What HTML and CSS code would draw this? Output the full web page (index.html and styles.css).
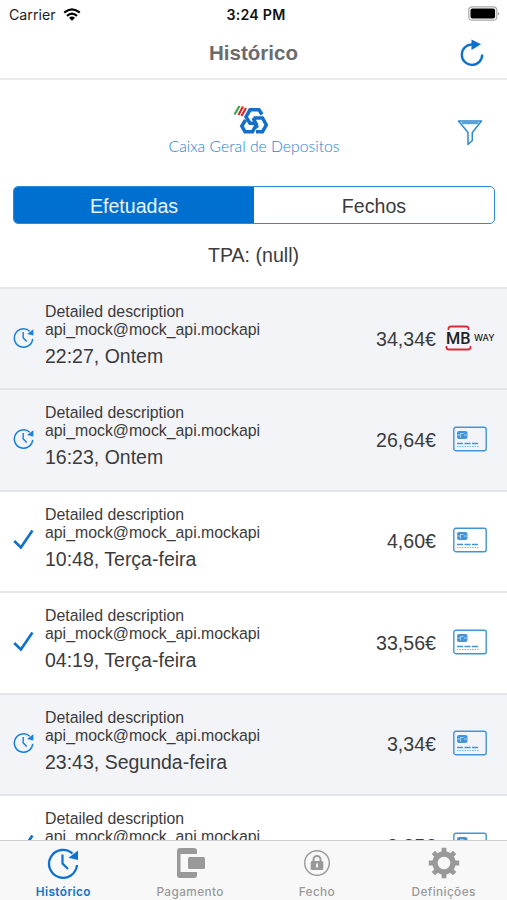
FILE: index.html
```html
<!DOCTYPE html>
<html lang="pt">
<head>
<meta charset="utf-8">
<title>Histórico</title>
<link rel="stylesheet" href="styles.css">
</head>
<body>
<svg width="0" height="0" class="defs">
  <symbol id="clock" viewBox="0 0 32 32">
    <path d="M25.500 6.500A14 14 0 1 0 30 18" fill="none" stroke="currentColor" stroke-width="2.300"/>
    <path d="M31 3.500V13L21.500 10.800Z" fill="currentColor"/>
    <path d="M15.500 7.500V16.500L21 22" fill="none" stroke="currentColor" stroke-width="2.200"/>
  </symbol>
  <symbol id="check" viewBox="0 0 20 20">
    <path d="M1.200 11.500L7.500 17.500L18.500 1.500" fill="none" stroke="currentColor" stroke-width="2.500"/>
  </symbol>
  <symbol id="card" viewBox="0 0 34 26">
    <rect x=".8" y="1.300" width="32.400" height="23.400" rx="2" fill="none" stroke="#4294d9" stroke-width="1.400"/>
    <rect x="4" y="5" width="10.500" height="8" rx="2" fill="#4294d9"/>
    <path d="M4 9H7M11 9H14M7.500 11.500V7.500H10.500" fill="none" stroke="#c4def4" stroke-width=".8"/>
    <path d="M4 17.500H25" stroke="#4294d9" stroke-width="1.500" stroke-dasharray="6 1.500"/>
    <path d="M4 20.500H26" stroke="#7fb5e4" stroke-width="1.200" stroke-dasharray="1.500 1"/>
  </symbol>
</svg>
<div class="screen">
  <header class="status">
    <div class="carrier">Carrier
      <svg width="18" height="13" viewBox="0 0 18 13"><g fill="none" stroke="#000" stroke-width="2.200"><path d="M1.200 4.600Q9-2 16.800 4.600"/><path d="M4 7.800Q9 3.400 14 7.800"/></g><path d="M6 9.700Q9 7.300 12 9.700L9 12.700Z"/></svg>
    </div>
    <div class="time">3:24 PM</div>
    <svg class="battery" width="33" height="15" viewBox="0 0 33 15"><rect x="1.800" y=".8" width="28" height="13.400" rx="3.500" fill="#fff" stroke="#aaa" stroke-width="1.200"/><rect x="3.500" y="2.500" width="24.600" height="10" rx="2"/><path d="M31.200 5.500Q33 7.500 31.200 9.500Z" fill="#888"/></svg>
  </header>
  <nav class="nav">
    <h1>Histórico</h1>
    <svg width="24" height="28" viewBox="0 0 24 28"><path d="M12.500 5.500A10.200 10.200 0 1 0 22.200 15.500" fill="none" stroke="#0b70ce" stroke-width="2.300"/><path d="M11.500 .5L21 5.200L11.500 11Z" fill="#0b70ce"/></svg>
  </nav>
  <section class="brand">
    <svg class="logo" width="174" height="56" viewBox="0 0 174 56">
      <g fill="none" stroke-width="2.200"><path d="M67.500 11.500L72.500 3" stroke="#3da653"/><path d="M71.500 12L76 3.500" stroke="#d42c36"/><path d="M74.500 13L79 5" stroke="#d42c36"/></g>
      <g fill="none" stroke="#136fc9" stroke-width="3.500"><path d="M95 11.500L92 6.800H83L79 14L83 20.300H87.500L90.500 25"/><path d="M78.500 17L74.800 23L78 28.700H85.500L89.500 21.500L86 15"/><path d="M86.500 15H95.500L99.300 22L95.500 28.700H89"/></g>
      <text x="1.500" y="49" textLength="171" lengthAdjust="spacingAndGlyphs">Caixa Geral de Depositos</text>
    </svg>
    <svg class="filter" width="26" height="28" viewBox="0 0 26 28"><path d="M1.500 2H24.500L15.300 13.500V21.500L11 25.500V13.500Z" fill="none" stroke="#3189d3" stroke-width="1.500" stroke-linejoin="round"/><path d="M5 3.700H21.500" stroke="#5ba1dc" stroke-width="3"/></svg>
  </section>
  <div class="segments"><div class="segment active">Efetuadas</div><div class="segment">Fechos</div></div>
  <div class="terminal">TPA: (null)</div>
  <main class="list">
    <article class="row shaded"><svg class="state"><use href="#clock"/></svg><div class="info"><p>Detailed description</p><p>api_mock@mock_api.mockapi</p><p class="when">22:27, Ontem</p></div><div class="amount">34,34€</div><div class="method">
      <svg width="50" height="26" viewBox="0 0 50 26"><path d="M3.500 5V3.500Q3.500 1.500 6 1.500H21Q23.500 1.500 23.500 3.500V5M1.500 21V22.500Q1.500 24.500 4 24.500H23Q25.500 24.500 25.500 22.500V21" fill="none" stroke="#d92b38" stroke-width="1.800"/><text class="mb" x="1" y="18.500" textLength="24.500" lengthAdjust="spacingAndGlyphs">MB</text><text class="way" x="29" y="16" textLength="20.500" lengthAdjust="spacingAndGlyphs">WAY</text></svg></div></article>
    <article class="row shaded"><svg class="state"><use href="#clock"/></svg><div class="info"><p>Detailed description</p><p>api_mock@mock_api.mockapi</p><p class="when">16:23, Ontem</p></div><div class="amount">26,64€</div><div class="method"><svg class="card"><use href="#card"/></svg></div></article>
    <article class="row"><svg class="state"><use href="#check"/></svg><div class="info"><p>Detailed description</p><p>api_mock@mock_api.mockapi</p><p class="when">10:48, Terça-feira</p></div><div class="amount">4,60€</div><div class="method"><svg class="card"><use href="#card"/></svg></div></article>
    <article class="row"><svg class="state"><use href="#check"/></svg><div class="info"><p>Detailed description</p><p>api_mock@mock_api.mockapi</p><p class="when">04:19, Terça-feira</p></div><div class="amount">33,56€</div><div class="method"><svg class="card"><use href="#card"/></svg></div></article>
    <article class="row shaded"><svg class="state"><use href="#clock"/></svg><div class="info"><p>Detailed description</p><p>api_mock@mock_api.mockapi</p><p class="when">23:43, Segunda-feira</p></div><div class="amount">3,34€</div><div class="method"><svg class="card"><use href="#card"/></svg></div></article>
    <article class="row"><svg class="state"><use href="#check"/></svg><div class="info"><p>Detailed description</p><p>api_mock@mock_api.mockapi</p></div><div class="amount">3,35€</div><div class="method"><svg class="card"><use href="#card"/></svg></div></article>
  </main>
  <footer class="tabs">
    <div class="tab current"><svg width="32" height="32"><use href="#clock"/></svg><span>Histórico</span></div>
    <div class="tab"><svg width="32" height="32" viewBox="0 0 32 32"><path d="M5 1H20Q23 1 23 4V7H6.500V25H23V28Q23 31 20 31H6Q3 31 3 28V4Q3 1 6 1Z" fill="#999"/><rect x="14" y="10" width="17" height="12" rx="1.500" fill="#999"/></svg><span>Pagamento</span></div>
    <div class="tab"><svg width="32" height="32" viewBox="0 0 32 32"><circle cx="16" cy="16" r="12.300" fill="none" stroke="#999" stroke-width="1.400"/><path d="M12.500 15V12.500A3.500 3.500 0 0 1 19.500 12.500V15" fill="none" stroke="#999" stroke-width="2"/><rect x="9.700" y="14" width="12.600" height="9" rx="1.500" fill="#999"/><path d="M16 16.500V20.500" stroke="#f8f8f8" stroke-width="1.800"/></svg><span>Fecho</span></div>
    <div class="tab"><svg width="32" height="32" viewBox="0 0 32 32"><circle cx="16" cy="16" r="9" fill="none" stroke="#999" stroke-width="5.400"/><path d="M16 .8V5M16 27V31.200M.8 16H5M27 16H31.200M5.400 5.400L8.400 8.400M23.600 23.600L26.600 26.600M26.600 5.400L23.600 8.400M8.400 23.600L5.400 26.600" stroke="#999" stroke-width="4.800"/></svg><span>Definições</span></div>
  </footer>
</div>
</body>
</html>
```
FILE: styles.css
```css
* { box-sizing: border-box; }
body { margin: 0; background: #fff; color: #3b3b3d; font-family: "Liberation Sans", Arial, sans-serif; }
p, h1 { margin: 0; }
svg { display: block; flex: none; }
.defs { position: absolute; }
.screen { width: 507px; height: 900px; display: flex; flex-direction: column; overflow: hidden; }
.status { flex: none; height: 28px; padding: 0 7px 0 9px; display: grid; grid-template-columns: 1fr auto 1fr; align-items: center; font: 14.2px Inter, sans-serif; color: #222; }
.carrier { display: flex; align-items: center; gap: 7px; }
.time { font-weight: 600; color: #111; letter-spacing: .25px; padding-left: 3px; }
.battery { justify-self: end; margin-top: -2px; }
.nav { flex: none; height: 52px; border-bottom: 2px solid #eaecec; display: grid; grid-template-columns: 1fr auto 1fr; align-items: center; padding: 0 23px; }
.nav h1 { grid-column: 2; font-size: 20.5px; color: #6b6b6b; line-height: 24px; margin-top: -1px; }
.nav svg { justify-self: end; margin-top: -1px; }
.brand { flex: none; height: 106px; padding: 23px 24px 0; display: grid; grid-template-columns: 1fr auto 1fr; align-items: start; }
.logo { grid-column: 2; }
.logo text { font: 300 15.5px Lato, sans-serif; fill: #287fcf; }
.filter { justify-self: end; margin-top: 16px; }
.segments { flex: none; height: 38px; margin: 0 12px 0 13px; border: 1.500px solid #2e8ad7; border-radius: 5px; display: flex; overflow: hidden; font-size: 19.6px; line-height: 24px; }
.segment { flex: 1; display: flex; align-items: center; justify-content: center; padding-top: 1px; }
.active { background: #0070d0; color: #eaf5ff; }
.terminal { flex: none; height: 63px; line-height: 62px; text-align: center; font-size: 19.6px; }
.list { flex: 1; min-height: 0; overflow: hidden; border-top: 2px solid #e5e6e9; }
.row { height: 101.4px; border-bottom: 2px solid #e5e6e9; padding-left: 13px; display: flex; align-items: center; background: #fff; }
.shaded { background: #f2f4f8; }
.state { width: 21px; height: 21px; margin: -3px 11px 0 0; color: #0c70cd; }
.shaded .state { color: #1b80da; }
.info { flex: 1; height: 100%; padding-top: 14px; font-size: 15.85px; line-height: 18px; white-space: nowrap; }
.when { font-size: 19.5px; line-height: 24px; margin-top: 5px; }
.amount { font-size: 19.6px; margin-top: 1px; }
.method { width: 71px; display: flex; justify-content: center; padding-right: 3px; margin-top: -2px; }
.card { width: 34px; height: 26px; }
.mb { font: 500 16.5px Roboto, sans-serif; fill: #222; }
.way { font: 500 9.5px Inter, sans-serif; fill: #222; }
.tabs { flex: none; height: 60px; display: flex; background: #f8f8f8; border-top: 1px solid #cfcfcf; }
.tab { flex: 1; display: flex; flex-direction: column; align-items: center; padding-top: 6px; font: 500 11.8px/16px Inter, sans-serif; color: #999; letter-spacing: .4px; }
.tab span { margin-top: 5px; }
.current { color: #0d72d0; font-weight: 600; }
```
